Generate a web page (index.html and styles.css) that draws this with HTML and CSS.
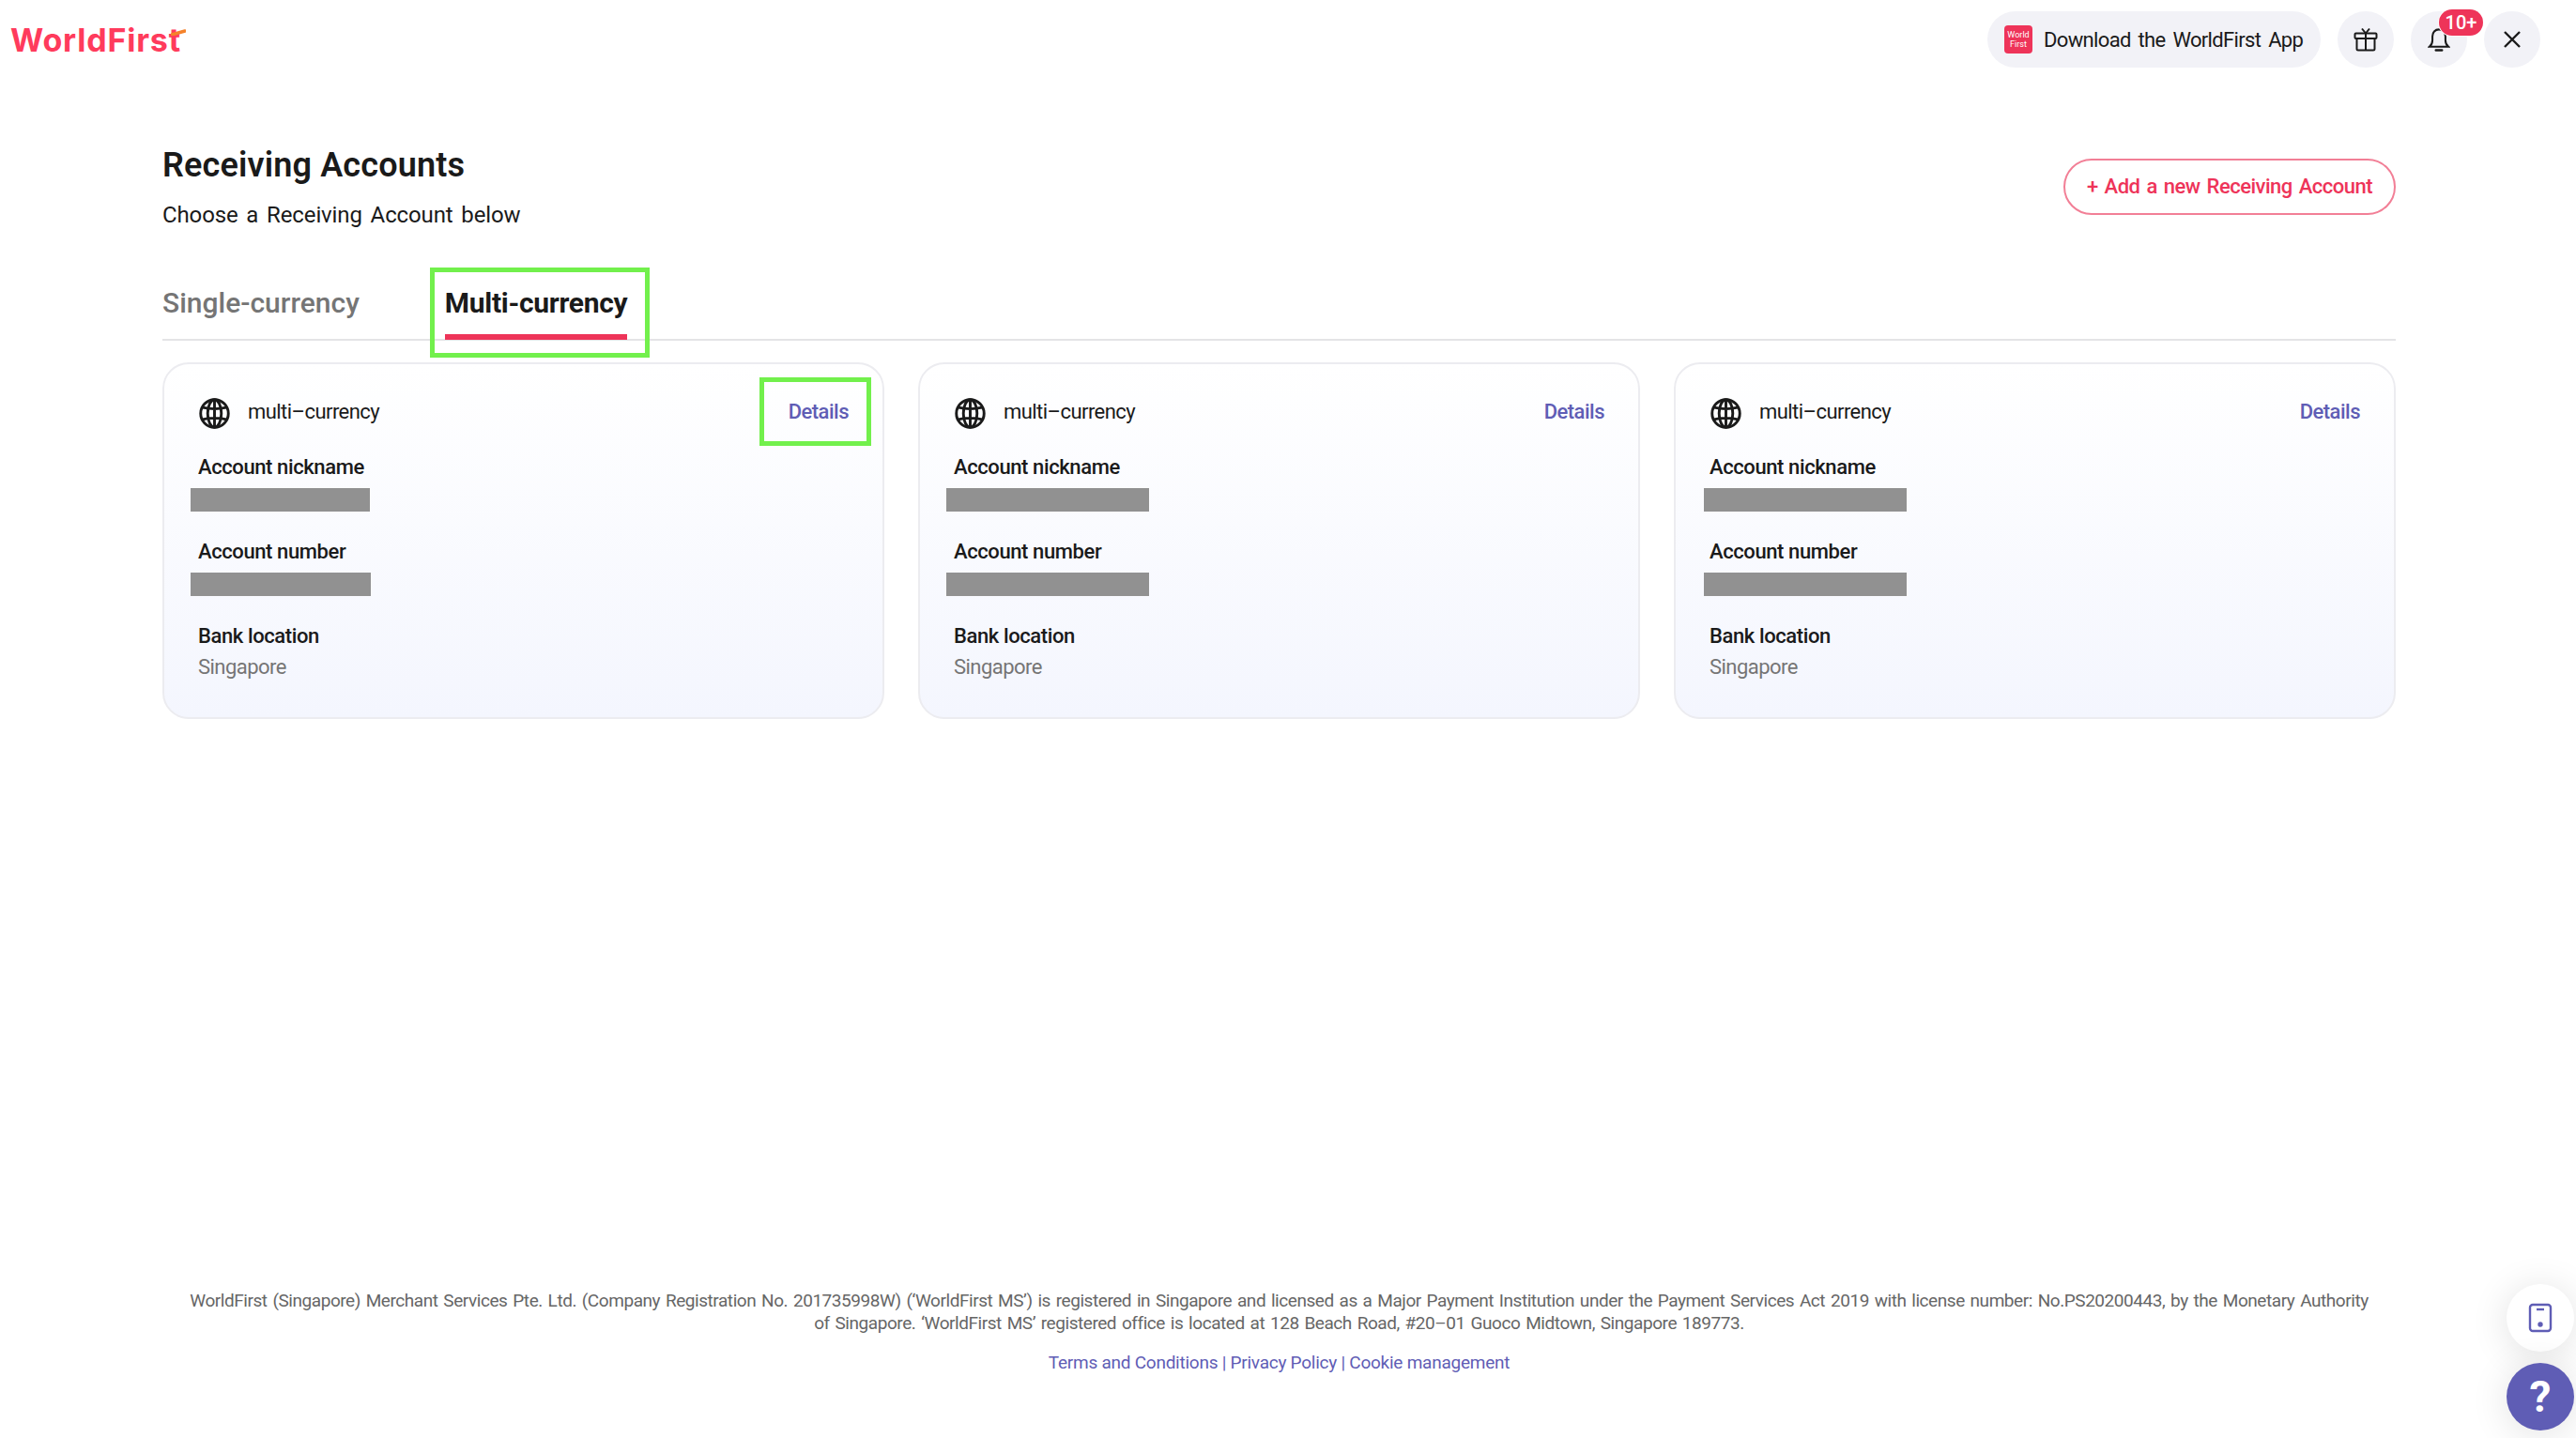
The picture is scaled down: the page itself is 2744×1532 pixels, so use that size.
FILE: index.html
```html
<!DOCTYPE html>
<html lang="en">
<head>
<meta charset="utf-8">
<title>Receiving Accounts</title>
<link rel="stylesheet" href="styles.css">
</head>
<body>
<div class="page">
  <header class="topbar">
    <div class="logo">WorldFirs<span class="logo-t">t<svg class="logo-tick" viewBox="0 0 16 7"><path d="M1 6 L15 2" stroke="#f5822a" stroke-width="3.500" stroke-linecap="round"/></svg></span></div>
    <div class="actions">
      <div class="pill">
        <div class="app-icon"><span>World</span><span>First</span></div>
        <span class="pill-text">Download the WorldFirst App</span>
      </div>
      <div class="round">
        <svg width="26" height="26" viewBox="0 0 26 26" fill="none" stroke="#1a1a1a" stroke-width="2" stroke-linejoin="round"><rect x="1.500" y="6.500" width="23" height="5.500" rx="1"/><path d="M3.500 12v11a1.500 1.500 0 0 0 1.500 1.500h16a1.500 1.500 0 0 0 1.500-1.500V12"/><path d="M13 6.500v18M13 6.500L9 1.500M13 6.500l4-5"/></svg>
      </div>
      <div class="round bell">
        <svg class="bell-icon" width="24" height="28" viewBox="0 0 26 30" fill="none" stroke="#1a1a1a" stroke-width="2.200"><path d="M2 23.500h22c-2.500-2-3.500-4-3.500-7.500v-4.500C20.500 7 17.500 3.500 13 3.500S5.500 7 5.500 11.500V16c0 3.500-1 5.500-3.500 7.500z"/><path d="M9.500 27.500h7" stroke-width="2.600" stroke-linecap="round"/></svg>
        <span class="badge">10+</span>
      </div>
      <div class="round">
        <svg width="20" height="20" viewBox="0 0 20 20" fill="none" stroke="#1a1a1a" stroke-width="2.400"><path d="M2 2l16 16M18 2L2 18"/></svg>
      </div>
    </div>
  </header>

  <main class="main">
    <div class="head">
      <div>
        <h1 class="title">Receiving Accounts</h1>
        <p class="subtitle">Choose a Receiving Account below</p>
      </div>
      <a class="add-btn">+ Add a new Receiving Account</a>
    </div>

    <div class="tabs">
      <div class="tab">Single-currency</div>
      <div class="tab tab-active">Multi-currency<span class="mark mark-tab"></span></div>
    </div>

    <section class="cards">
      <article class="card">
        <div class="card-head">
          <svg class="globe" viewBox="0 0 34 34" fill="none" stroke="#1a1a1a" stroke-width="3"><circle cx="17" cy="17" r="15.200"/><ellipse cx="17" cy="17" rx="7.500" ry="15.200"/><path d="M17 2v30M4 10.500Q17 13.500 30 10.500M4 23.500Q17 20.500 30 23.500"/></svg>
          <span class="card-type">multi–currency</span>
          <a class="details">Details<span class="mark mark-details"></span></a>
        </div>
        <div class="label">Account nickname</div>
        <div class="redact redact-a"></div>
        <div class="label">Account number</div>
        <div class="redact redact-b"></div>
        <div class="label">Bank location</div>
        <div class="value">Singapore</div>
      </article>
      <article class="card">
        <div class="card-head">
          <svg class="globe" viewBox="0 0 34 34" fill="none" stroke="#1a1a1a" stroke-width="3"><circle cx="17" cy="17" r="15.200"/><ellipse cx="17" cy="17" rx="7.500" ry="15.200"/><path d="M17 2v30M4 10.500Q17 13.500 30 10.500M4 23.500Q17 20.500 30 23.500"/></svg>
          <span class="card-type">multi–currency</span>
          <a class="details">Details</a>
        </div>
        <div class="label">Account nickname</div>
        <div class="redact redact-c"></div>
        <div class="label">Account number</div>
        <div class="redact redact-c"></div>
        <div class="label">Bank location</div>
        <div class="value">Singapore</div>
      </article>
      <article class="card">
        <div class="card-head">
          <svg class="globe" viewBox="0 0 34 34" fill="none" stroke="#1a1a1a" stroke-width="3"><circle cx="17" cy="17" r="15.200"/><ellipse cx="17" cy="17" rx="7.500" ry="15.200"/><path d="M17 2v30M4 10.500Q17 13.500 30 10.500M4 23.500Q17 20.500 30 23.500"/></svg>
          <span class="card-type">multi–currency</span>
          <a class="details">Details</a>
        </div>
        <div class="label">Account nickname</div>
        <div class="redact redact-d"></div>
        <div class="label">Account number</div>
        <div class="redact redact-d"></div>
        <div class="label">Bank location</div>
        <div class="value">Singapore</div>
      </article>
    </section>
  </main>

  <footer class="footer">
    <p class="legal">WorldFirst (Singapore) Merchant Services Pte. Ltd. (Company Registration No. 201735998W) (‘WorldFirst MS’) is registered in Singapore and licensed as a Major Payment Institution under the Payment Services Act 2019 with license number: No.PS20200443, by the Monetary Authority of Singapore. ‘WorldFirst MS’ registered office is located at 128 Beach Road, #20–01 Guoco Midtown, Singapore 189773.</p>
    <p class="links"><a>Terms and Conditions</a> | <a>Privacy Policy</a> | <a>Cookie management</a></p>
  </footer>

  <div class="floaters">
    <div class="float float-white">
      <svg width="26" height="32" viewBox="0 0 26 32" fill="none" stroke="#5f5db5" stroke-width="2.400"><rect x="2" y="2" width="22" height="28" rx="3"/><path d="M9 7h8"/><circle cx="13" cy="23" r="1.500" fill="#5f5db5"/></svg>
    </div>
    <div class="float float-purple">?</div>
  </div>
</div>
</body>
</html>
```
FILE: styles.css
```css
* { box-sizing: border-box; }
html, body { margin: 0; padding: 0; background: #fff; }
body { font-family: Roboto, "Liberation Sans", sans-serif; color: #1a1a1a; }
p, h1 { margin: 0; }

.page { position: relative; width: 2744px; height: 1532px; display: flex; flex-direction: column; overflow: hidden; }

.topbar { display: flex; justify-content: space-between; align-items: flex-start; padding: 12px 38px 0 11px; height: 169px; flex: none; }
.logo { font-family: Inter, sans-serif; font-weight: 700; font-size: 34px; line-height: 40px; letter-spacing: 0.8px; color: #ff3b5c; margin-top: 11px; }
.logo-t { position: relative; }
.logo-tick { position: absolute; left: 2px; top: 9px; width: 16px; height: 7px; }
.actions { display: flex; gap: 18px; }
.pill { height: 60px; width: 355px; border-radius: 30px; background: #f2f2f7; display: flex; align-items: center; padding-left: 18px; gap: 12px; }
.app-icon { width: 30px; height: 30px; border-radius: 4px; background: #ee3459; color: #fff; font-size: 9px; line-height: 10px; display: flex; flex-direction: column; align-items: center; justify-content: center; }
.pill-text { font-size: 22px; letter-spacing: -0.65px; word-spacing: 3px; white-space: nowrap; }
.round { position: relative; width: 60px; height: 60px; border-radius: 50%; background: #f2f2f7; display: flex; align-items: center; justify-content: center; }
.badge { position: absolute; left: 30px; top: -2px; width: 47px; height: 28px; border-radius: 14px; background: #ee3459; color: #fff; font-size: 20px; font-weight: 500; line-height: 28px; text-align: center; box-shadow: 0 0 0 1px #fff; }

.main { padding: 0 192px 0 173px; flex: none; }
.head { display: flex; justify-content: space-between; align-items: flex-start; }
.title { font-size: 36px; font-weight: 600; line-height: 42px; margin-top: -14px; letter-spacing: 0.15px; }
.subtitle { font-size: 24px; line-height: 30px; margin-top: 17px; letter-spacing: -0.13px; word-spacing: 3px; }
.add-btn { width: 354px; height: 60px; border: 2px solid #f27f96; border-radius: 30px; color: #ee3459; font-size: 22px; font-weight: 500; line-height: 56px; text-align: center; letter-spacing: -0.5px; word-spacing: 2px; }

.tabs { display: flex; gap: 91px; height: 58px; margin-top: 61px; border-bottom: 2px solid #e4e4e6; }
.tab { position: relative; font-size: 30px; font-weight: 500; line-height: 36px; color: #757575; height: 56px; }
.tab-active { color: #1a1a1a; font-weight: 700; letter-spacing: -0.3px; }
.tab-active::after { content: ""; position: absolute; left: 0; right: 0; bottom: -1px; height: 6px; background: #ee3459; }

.mark { position: absolute; border: 5px solid #72f04c; pointer-events: none; }
.mark-tab { left: -16px; right: -24px; top: -20px; bottom: -20px; }
.mark-details { left: -31px; right: -24px; top: -24px; bottom: -23px; }

.cards { display: grid; grid-template-columns: repeat(3, 1fr); gap: 36px; margin-top: 23px; }
.card { height: 380px; border: 2px solid #ececf0; border-radius: 28px; background: linear-gradient(180deg, #fff 0%, #f4f6fe 100%); padding: 36px 36px 0 36px; }
.card-head { display: flex; align-items: center; height: 33px; margin-bottom: 28px; }
.globe { width: 33px; height: 33px; flex: none; margin-left: 1px; }
.card-type { font-size: 22px; margin-left: 19px; letter-spacing: -0.55px; position: relative; top: -2px; }
.details { position: relative; margin-left: auto; color: #5f5db5; font-size: 22px; font-weight: 500; line-height: 26px; top: -2px; letter-spacing: -0.5px; }
.label { font-size: 22px; font-weight: 500; line-height: 26px; letter-spacing: -0.4px; }
.redact { background: #919191; height: 25px; margin: 9px 0 30px -8px; }
.redact-a { width: 191px; }
.redact-b { width: 192px; }
.redact-c { width: 216px; }
.redact-d { width: 216px; margin-left: -6px; }
.value { font-size: 22px; line-height: 26px; color: #757575; margin-top: 7px; letter-spacing: -0.55px; }

.footer { margin-top: auto; padding: 0 215px 68px 196px; text-align: center; color: #666; font-size: 19px; line-height: 24px; letter-spacing: -0.44px; word-spacing: 1.500px; }
.links { margin-top: 18px; color: #5f5db5; letter-spacing: -0.25px; word-spacing: 0; }
.links a { color: #5f5db5; }

.floaters { position: absolute; right: 2px; bottom: 8px; display: flex; flex-direction: column; gap: 12px; }
.float { width: 72px; height: 72px; border-radius: 50%; display: flex; align-items: center; justify-content: center; box-shadow: 0 4px 40px rgba(0,0,0,0.12); }
.float-white { background: #fff; }
.float-purple { background: #5f5db5; color: #fff; font-size: 46px; font-weight: 700; }
```
